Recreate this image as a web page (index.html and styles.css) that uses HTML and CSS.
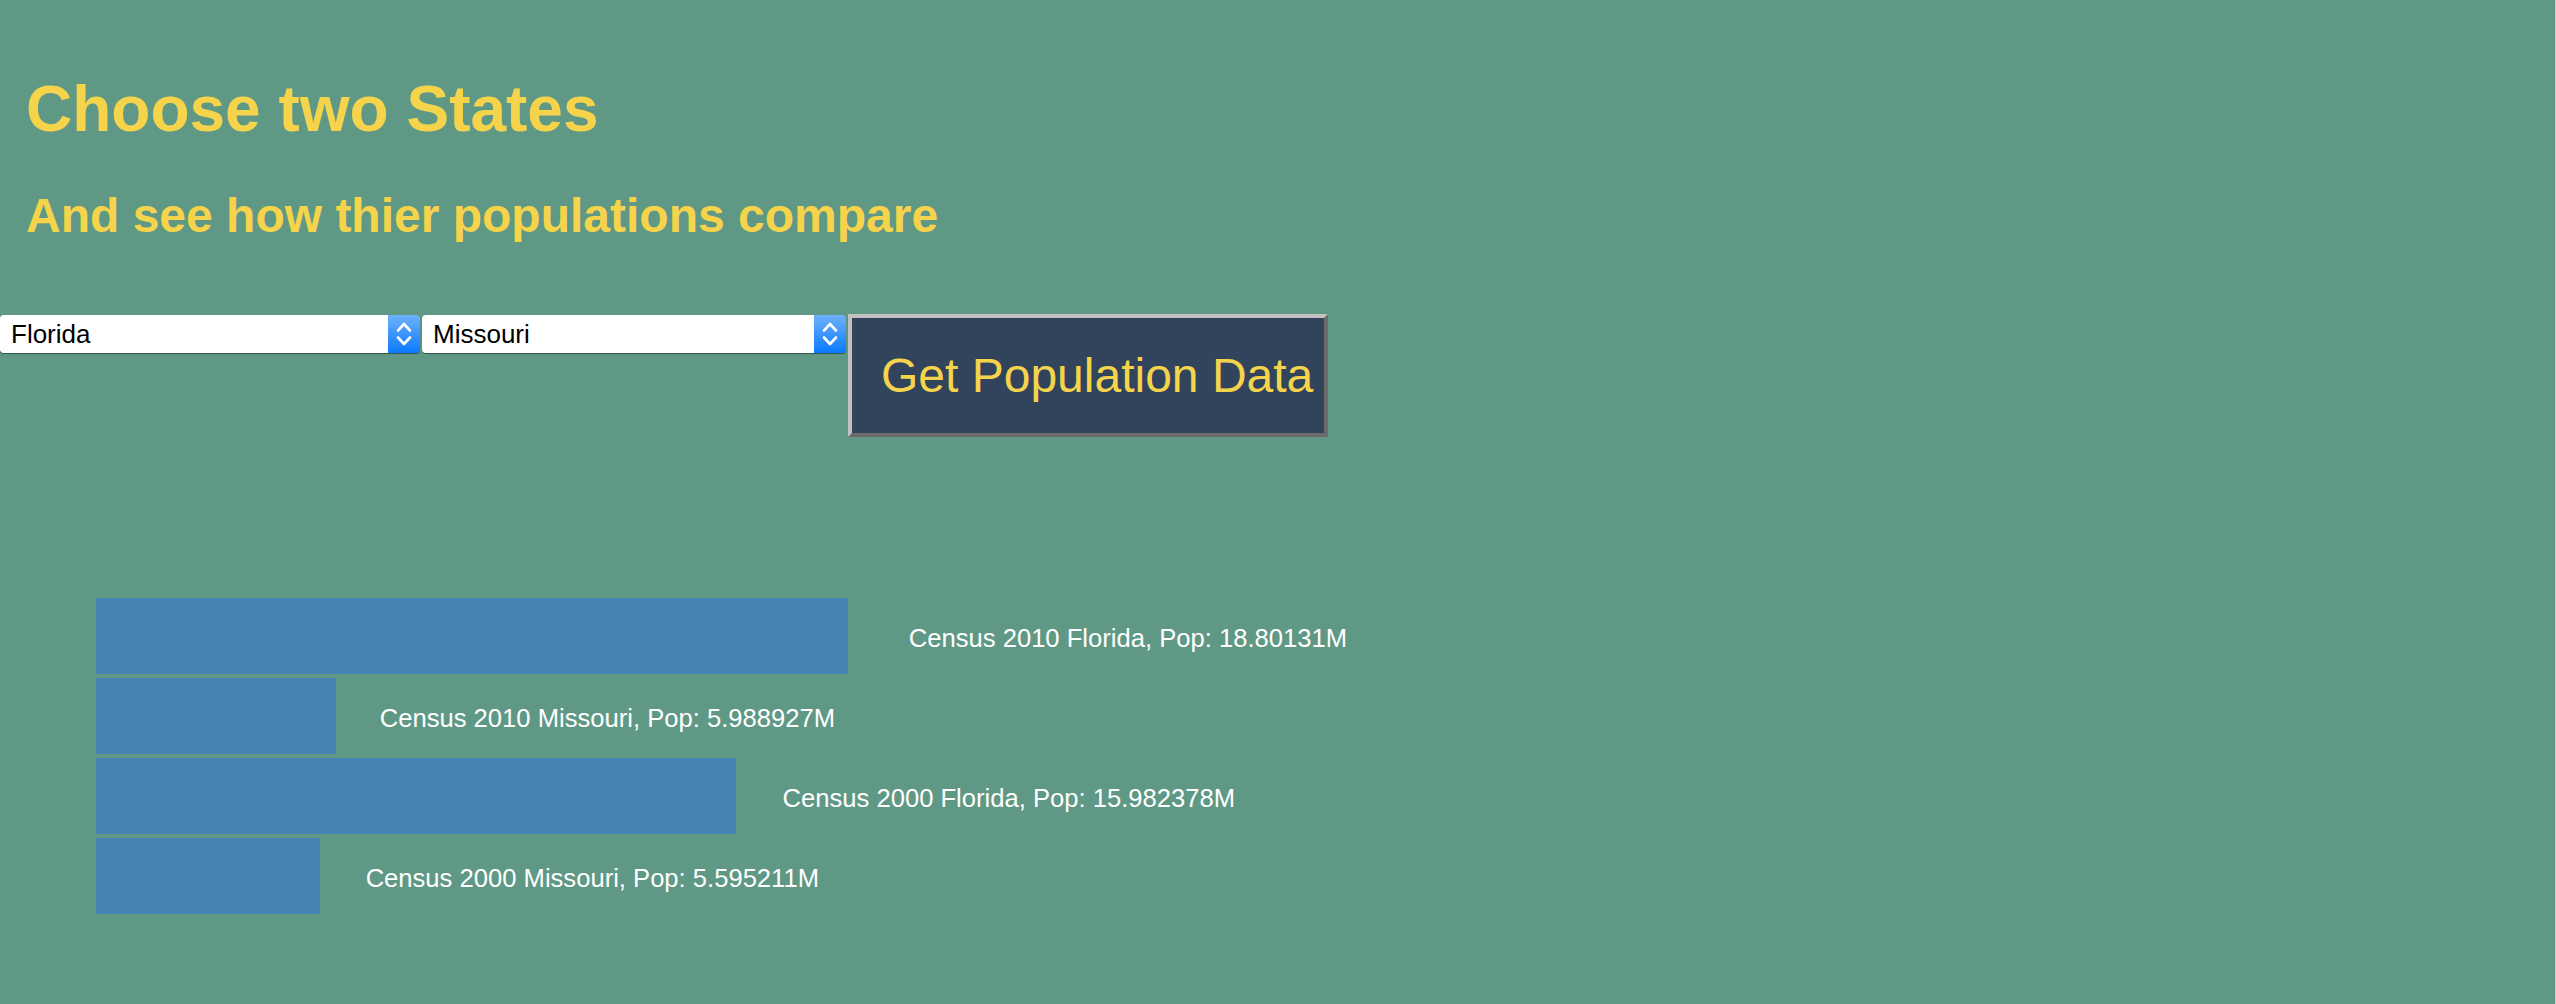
FILE: index.html
```html
<!DOCTYPE html>
<html lang="en">
<head>
<meta charset="utf-8">
<title>Census Population Comparison</title>
<link rel="stylesheet" href="styles.css">
</head>
<body>
<header class="intro">
  <h1 class="title">Choose two States</h1>
  <h2 class="subtitle">And see how thier populations compare</h2>
</header>
<form class="controls">
  <div class="picker picker-a">
    <select class="picker-select" aria-label="First state">
      <option>Florida</option>
      <option>Missouri</option>
    </select>
    <span class="picker-arrow">
      <svg class="chevrons" width="32" height="38" viewBox="0 0 32 38" aria-hidden="true">
        <path d="M10 15.5 L16 9 L22 15.5" />
        <path d="M10 22.5 L16 29 L22 22.5" />
      </svg>
    </span>
  </div>
  <div class="picker picker-b">
    <select class="picker-select" aria-label="Second state">
      <option>Missouri</option>
      <option>Florida</option>
    </select>
    <span class="picker-arrow">
      <svg class="chevrons" width="32" height="38" viewBox="0 0 32 38" aria-hidden="true">
        <path d="M10 15.5 L16 9 L22 15.5" />
        <path d="M10 22.5 L16 29 L22 22.5" />
      </svg>
    </span>
  </div>
  <button type="button" class="fetch">Get Population Data</button>
</form>
<section class="chart">
  <div class="row"><div class="bar" style="width:752px"></div><span class="label">Census 2010 Florida, Pop: 18.80131M</span></div>
  <div class="row"><div class="bar" style="width:240px"></div><span class="label">Census 2010 Missouri, Pop: 5.988927M</span></div>
  <div class="row"><div class="bar" style="width:640px"></div><span class="label">Census 2000 Florida, Pop: 15.982378M</span></div>
  <div class="row"><div class="bar" style="width:224px"></div><span class="label">Census 2000 Missouri, Pop: 5.595211M</span></div>
</section>
</body>
</html>
```

FILE: styles.css
```css
html {
  background: #5f9985;
}

body {
  margin: 0;
  min-height: 1004px;
  background: #5f9985;
  font-family: "Liberation Sans", Arial, Helvetica, sans-serif;
  box-shadow: inset -1px 0 0 #b9cfc7;
}

.intro {
  padding-left: 26px;
  padding-top: 72px;
}

.title {
  margin: 0;
  font-size: 64px;
  line-height: 74px;
  font-weight: bold;
  color: #f5d44c;
}

.subtitle {
  margin: 42px 0 0;
  font-size: 48px;
  line-height: 56px;
  font-weight: bold;
  color: #f5d44c;
}

.controls {
  display: flex;
  align-items: flex-start;
  gap: 2px;
  margin: 70px 0 0;
}

.picker {
  display: flex;
  height: 38px;
  margin-top: 1px;
  border-radius: 4px;
  box-shadow: 0 1px 1px rgba(0, 0, 0, 0.45);
}

.picker-a {
  width: 420px;
}

.picker-b {
  width: 424px;
}

.picker-select {
  flex: 1;
  min-width: 0;
  -webkit-appearance: none;
  appearance: none;
  border: none;
  margin: 0;
  padding: 0 0 0 11px;
  height: 38px;
  line-height: 38px;
  background: #ffffff;
  border-radius: 4px 0 0 4px;
  font-family: "Liberation Sans", Arial, Helvetica, sans-serif;
  font-size: 26px;
  color: #000000;
  outline: none;
}

.picker-arrow {
  flex: none;
  width: 32px;
  height: 38px;
  border-radius: 0 4px 4px 0;
  background: linear-gradient(#6eb2fa, #3d95fc 50%, #0a7aff);
}

.chevrons {
  display: block;
  fill: none;
  stroke: #ffffff;
  stroke-width: 2.6;
  stroke-linecap: round;
  stroke-linejoin: round;
}

.fetch {
  box-sizing: border-box;
  width: 480px;
  height: 123px;
  margin: 0;
  padding: 0 11px 0 29px;
  text-align: left;
  white-space: nowrap;
  background: #32445c;
  border: 4px solid;
  border-color: #c2c2c2 #6b6b6b #6b6b6b #c2c2c2;
  font-family: "Liberation Sans", Arial, Helvetica, sans-serif;
  font-size: 48px;
  line-height: 56px;
  font-weight: normal;
  color: #f5d44c;
}

.chart {
  display: flex;
  flex-direction: column;
  gap: 4px;
  margin-top: 161px;
  padding-left: 96px;
}

.row {
  display: flex;
  align-items: flex-start;
  height: 76px;
}

.bar {
  flex: none;
  height: 76px;
  background: #4682b4;
}

.label {
  flex: none;
  width: 499px;
  padding-top: 25px;
  text-align: right;
  white-space: nowrap;
  font-size: 25.6px;
  line-height: 30px;
  color: #ffffff;
}
```
